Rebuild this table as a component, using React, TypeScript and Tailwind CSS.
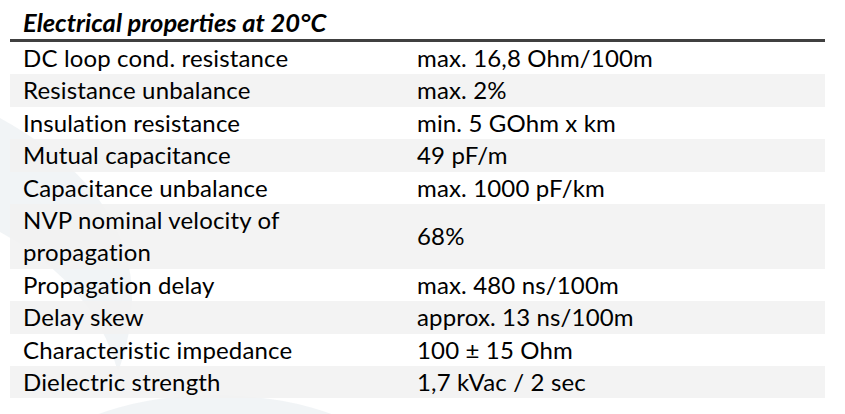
const rows: { label: string; value: string; tall?: boolean }[] = [
  { label: 'DC loop cond. resistance', value: 'max. 16,8 Ohm/100m' },
  { label: 'Resistance unbalance', value: 'max. 2%' },
  { label: 'Insulation resistance', value: 'min. 5 GOhm x km' },
  { label: 'Mutual capacitance', value: '49 pF/m' },
  { label: 'Capacitance unbalance', value: 'max. 1000 pF/km' },
  { label: 'NVP nominal velocity of propagation', value: '68%', tall: true },
  { label: 'Propagation delay', value: 'max. 480 ns/100m' },
  { label: 'Delay skew', value: 'approx. 13 ns/100m' },
  { label: 'Characteristic impedance', value: '100 ± 15 Ohm' },
  { label: 'Dielectric strength', value: '1,7 kVac / 2 sec' },
]

const Watermark = () => (
  <svg className="pointer-events-none absolute inset-0" width="845" height="414" viewBox="0 0 845 414">
    <path d="M0 118 Q 175 215 118 372 Q 95 285 0 232 Z" fill="#eef1f4" opacity="0.8" />
    <ellipse cx="215" cy="470" rx="175" ry="75" fill="#eef1f4" opacity="0.8" />
  </svg>
)

export default function App() {
  return (
    <div
      className="relative h-[414px] w-[845px] overflow-hidden bg-white text-[24px] tracking-[0.15px] text-black"
      style={{ fontFamily: 'Lato, "Open Sans", sans-serif' }}
    >
      <Watermark />
      <div className="relative pl-[10px] pt-[7px]">
        <div className="w-[815px] border-b-[3px] border-[#404040] pb-[1px] pl-[13px] text-[25.5px] font-bold italic leading-[31px] tracking-normal">
          Electrical properties at 20°C
        </div>
        <div className="w-[815px]">
          {rows.map((row, i) => (
            <div
              key={row.label}
              className={`grid grid-cols-[394px_1fr] items-center leading-[32.4px] ${
                i % 2 === 1 ? 'bg-[#f2f2f2]/90' : ''
              }`}
            >
              <div className={`pl-[13px] ${row.tall ? 'w-[300px]' : ''}`}>{row.label}</div>
              <div className="pl-[13px]">{row.value}</div>
            </div>
          ))}
        </div>
      </div>
    </div>
  )
}
